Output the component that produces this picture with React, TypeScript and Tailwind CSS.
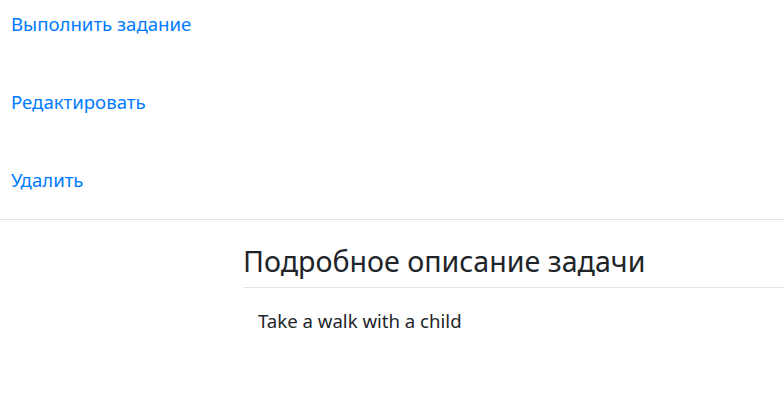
const actions = ['Выполнить задание', 'Редактировать', 'Удалить']

const App = () => {
  return (
    <div className="min-h-[411px] bg-white font-['Segoe_UI','Noto_Sans','Open_Sans',sans-serif] text-[#212529]">
      <div className="flex flex-col gap-[51px] px-[11px] pt-[10px] pb-[26px]">
        {actions.map((label) => (
          <a
            key={label}
            href="#"
            className="text-[18.6px] leading-[27px] text-[#007bff]"
          >
            {label}
          </a>
        ))}
      </div>
      <div className="border-t border-[#e2e2e2]" />
      <div className="flex">
        <div className="w-[243px] shrink-0" />
        <div className="flex-1">
          <h2 className="border-b border-[#e2e2e2] pt-[23px] pb-[8px] text-[28.6px] leading-[36px]">
            Подробное описание задачи
          </h2>
          <p className="px-[15px] pt-[19px] text-[18.6px] leading-[27px]">
            Take a walk with a child
          </p>
        </div>
      </div>
    </div>
  )
}

export default App
